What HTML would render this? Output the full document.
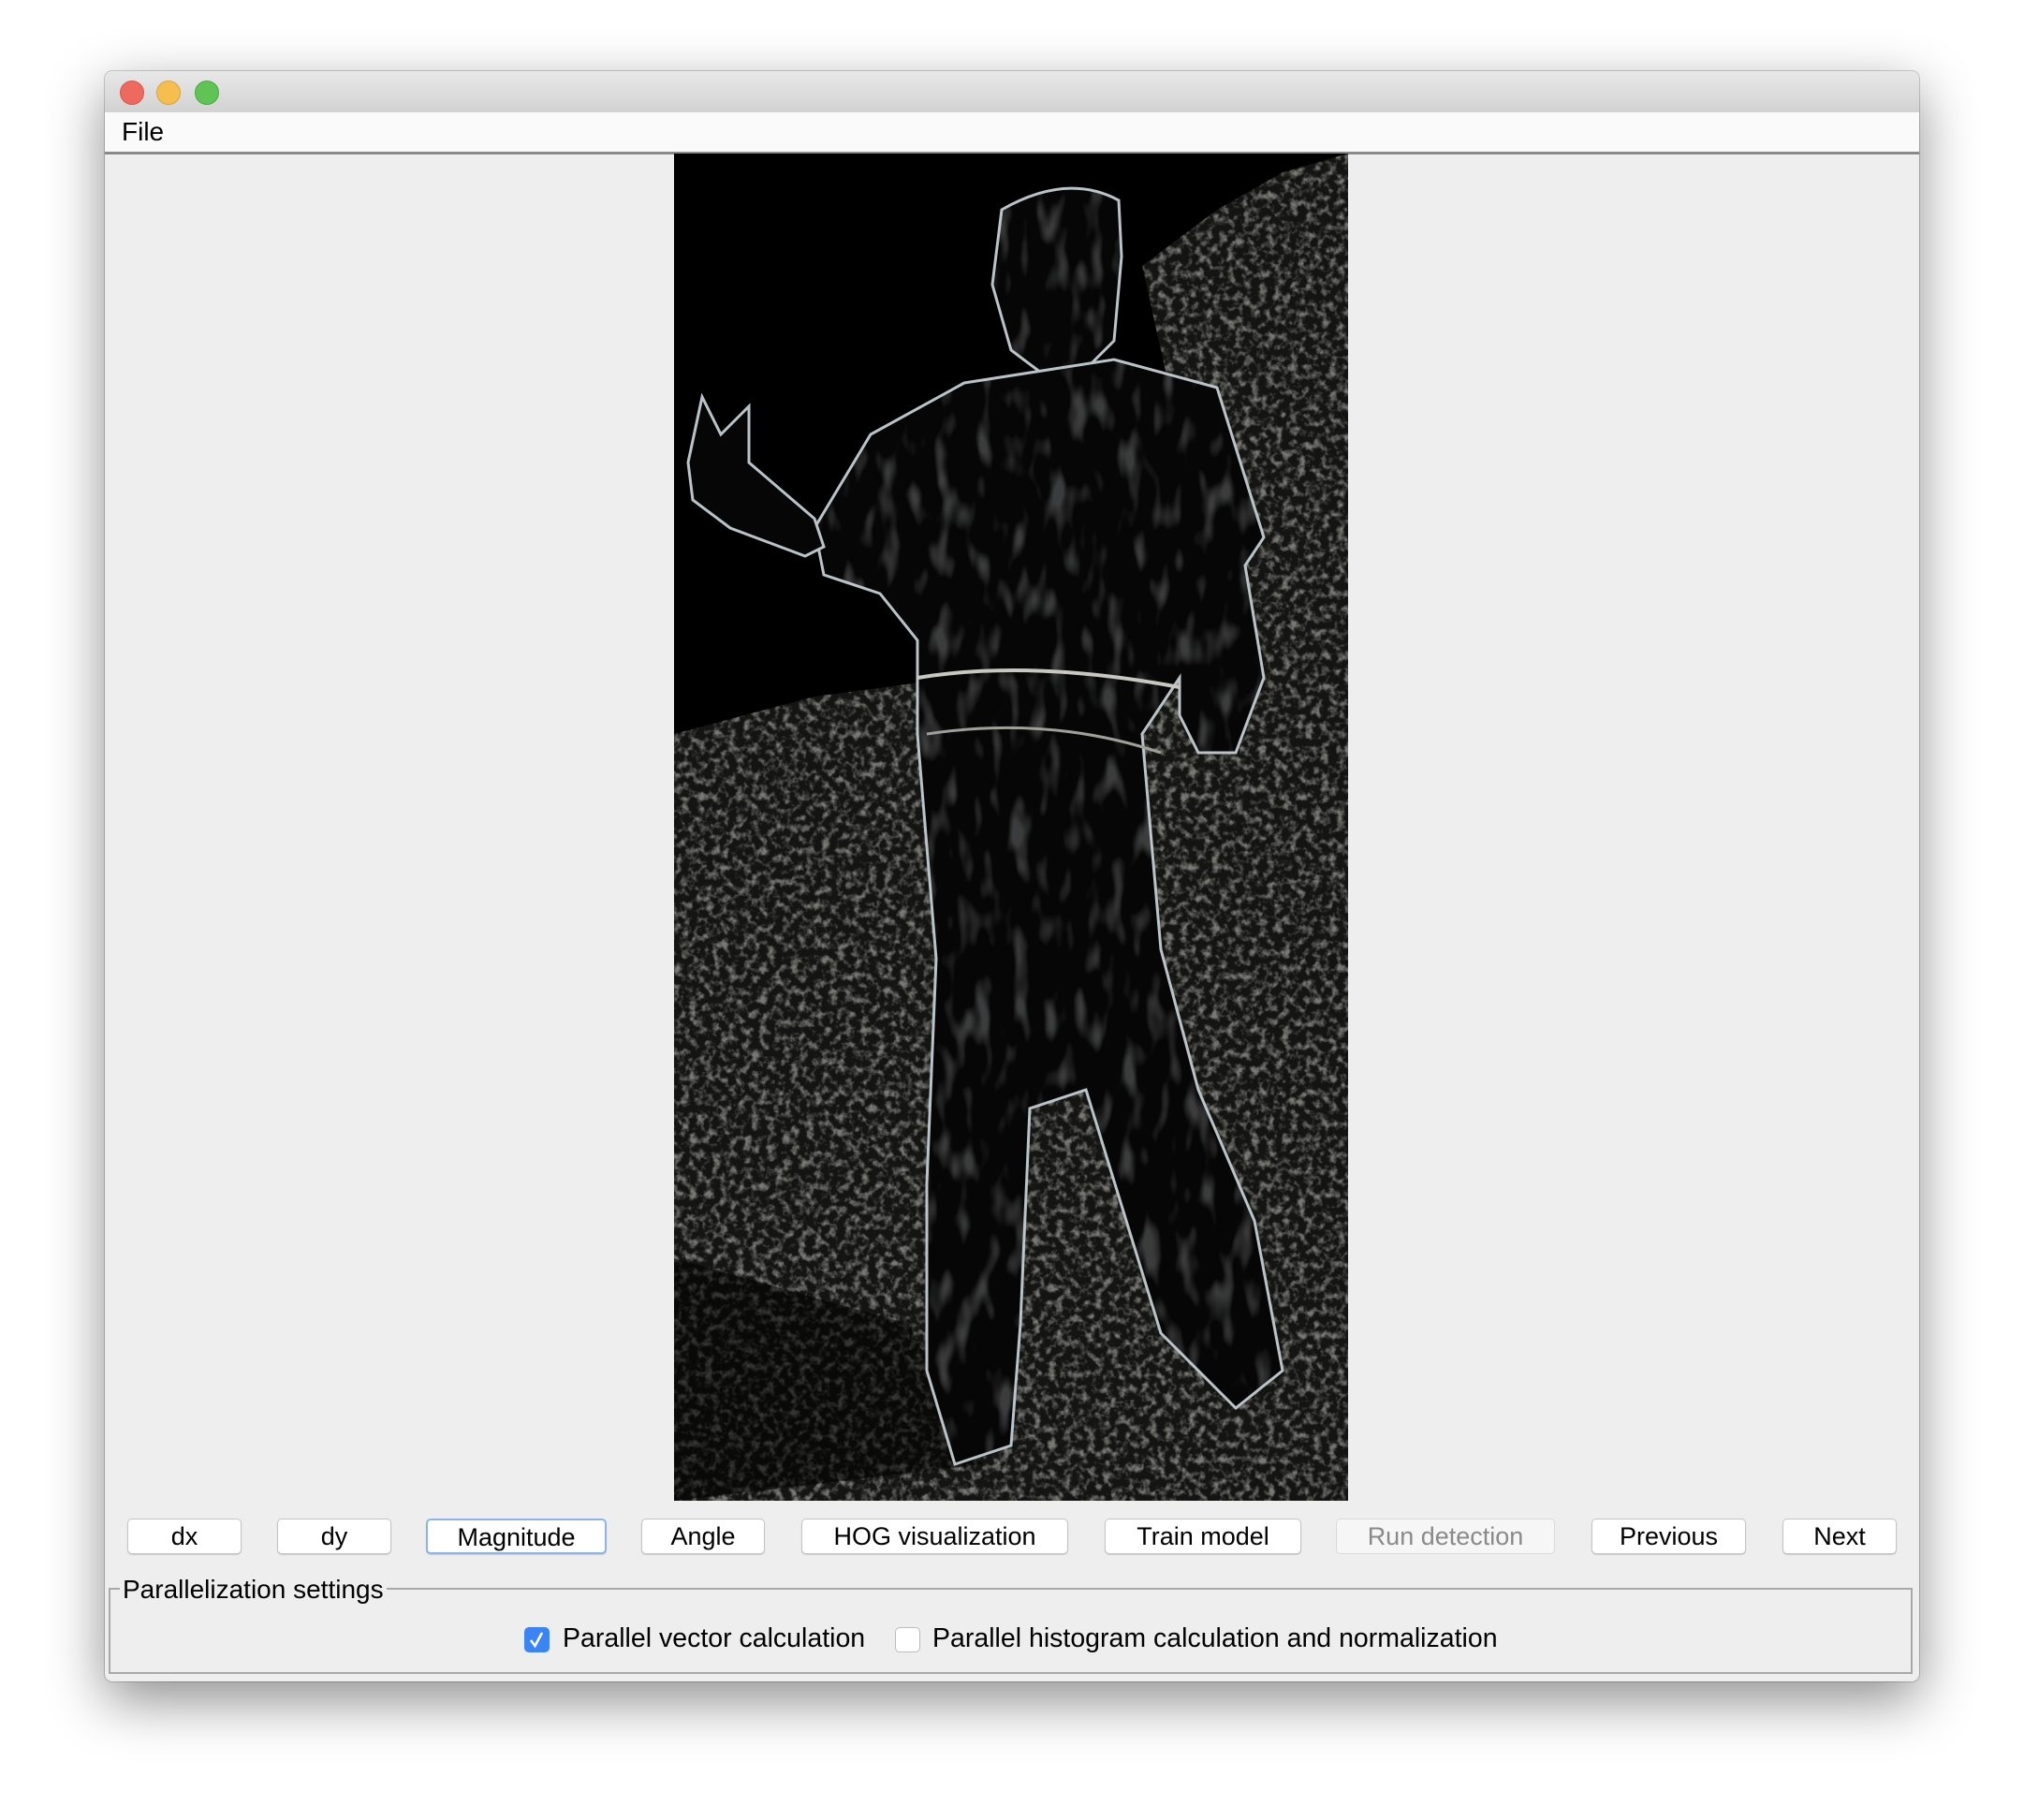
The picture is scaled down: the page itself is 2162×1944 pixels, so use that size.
<!DOCTYPE html>
<html><head><meta charset="utf-8"><style>
html,body{margin:0;padding:0;width:2162px;height:1944px;background:#fff;overflow:hidden;font-family:"Liberation Sans",sans-serif}
.win{position:absolute;left:112px;top:76px;width:1938px;height:1720px;background:#eeeeee;border-radius:8px;box-shadow:0 20px 60px rgba(0,0,0,.45),0 0 0 1px rgba(0,0,0,.18);overflow:hidden}
.title{position:absolute;left:0;top:0;width:100%;height:44px;background:linear-gradient(#e8e8e8,#d2d2d2);border-bottom:1px solid #b8b8b8}
.dot{position:absolute;top:10px;width:24px;height:24px;border-radius:50%}
.menu{position:absolute;left:0;top:44px;width:100%;height:42px;background:#fafafa;border-bottom:3px solid #8a8a8a}
.menu span{position:absolute;left:18px;top:5px;font-size:28px;color:#000}
.img{position:absolute;left:608px;top:88px;width:720px;height:1439px;background:#000}
.btn{position:absolute;top:1546px;height:38px;background:#fff;border:1px solid #c4c4c4;border-radius:5px;box-shadow:0 1px 1px rgba(0,0,0,.15);font-size:27px;line-height:36px;text-align:center;color:#000;box-sizing:border-box;white-space:nowrap}
.group{position:absolute;left:4px;top:1620px;width:1927px;height:92px;border:2px solid #a8a8a8;box-sizing:border-box}
.glabel{position:absolute;left:16px;top:1606px;background:#eeeeee;padding:0 3px;font-size:28px}
.cb{position:absolute;top:1662px;width:27px;height:27px;border-radius:5px;box-sizing:border-box}
.lbl{position:absolute;top:1658px;font-size:28.5px;white-space:nowrap}
</style></head><body>
<div class="win">
<div class="title">
<div class="dot" style="left:16px;background:#ee6a5e;border:1px solid #d8564b"></div>
<div class="dot" style="left:55px;background:#f6be4f;border:1px solid #dca23a"></div>
<div class="dot" style="left:96px;background:#5fc454;border:1px solid #4aa93f"></div>
</div>
<div class="menu"><span>File</span></div>
<div class="img">
<svg width="720" height="1439" viewBox="0 0 720 1439">
<defs>
<filter id="n" x="0" y="0" width="100%" height="100%">
<feTurbulence type="fractalNoise" baseFrequency="0.12" numOctaves="3" seed="3"/>
<feColorMatrix values="0 0 0 0 0.72  0 0 0 0 0.72  0 0 0 0 0.66  0 0 0 3 -1.35"/>
</filter>
<filter id="n2" x="0" y="0" width="100%" height="100%">
<feTurbulence type="fractalNoise" baseFrequency="0.05 0.02" numOctaves="2" seed="7"/>
<feColorMatrix values="0 0 0 0 0.7  0 0 0 0 0.72  0 0 0 0 0.74  0 0 0 4 -2.1"/>
</filter>
<clipPath id="bg"><path d="M0,620 L150,580 L300,560 L560,520 L540,300 L500,120 L580,60 L650,20 L720,0 L720,1439 L0,1439 Z"/></clipPath>
</defs>
<rect width="720" height="1439" fill="#000"/>
<g clip-path="url(#bg)">
<rect width="720" height="1439" fill="#141412"/>
<rect width="720" height="1439" filter="url(#n)" opacity=".5"/>
</g>
<path d="M0,1180 L250,1250 L330,1400 L0,1439 Z" fill="#000" opacity=".55"/>
<g fill="#060606" stroke="#b9c3c8" stroke-width="3">
<path d="M350,60 Q420,20 475,50 L478,110 L470,200 L440,230 L400,240 L360,210 L340,140 Z"/>
<path d="M310,245 L470,220 L580,250 L630,410 L610,440 L630,560 L600,640 L560,640 L540,600 L540,560 L500,620 L520,850 L560,1000 L620,1140 L650,1300 L600,1340 L520,1260 L440,1000 L380,1020 L370,1250 L360,1380 L300,1400 L270,1300 L270,1100 L280,860 L260,620 L260,520 L220,470 L160,450 L150,400 L210,300 Z"/>
<path d="M15,330 L30,260 L50,300 L80,270 L80,330 L150,390 L160,420 L140,430 L60,400 L20,370 Z"/>
</g>
<clipPath id="fig"><path d="M350,60 Q420,20 475,50 L478,110 L470,200 L440,230 L400,240 L360,210 L340,140 Z M310,245 L470,220 L580,250 L630,410 L610,440 L630,560 L600,640 L560,640 L540,600 L540,560 L500,620 L520,850 L560,1000 L620,1140 L650,1300 L600,1340 L520,1260 L440,1000 L380,1020 L370,1250 L360,1380 L300,1400 L270,1300 L270,1100 L280,860 L260,620 L260,520 L220,470 L160,450 L150,400 L210,300 Z"/></clipPath>
<rect width="720" height="1439" filter="url(#n2)" clip-path="url(#fig)" opacity=".25"/>
<path d="M260,560 Q380,540 540,570" stroke="#c8c8c0" stroke-width="4" fill="none"/>
<path d="M270,620 Q400,600 520,640" stroke="#a0a098" stroke-width="3" fill="none"/>
</svg>
</div>
<div class="btn" style="left:24px;width:122px">dx</div>
<div class="btn" style="left:184px;width:122px">dy</div>
<div class="btn" style="left:343px;width:193px;border:2px solid #8ab4ee">Magnitude</div>
<div class="btn" style="left:573px;width:132px">Angle</div>
<div class="btn" style="left:744px;width:285px">HOG visualization</div>
<div class="btn" style="left:1068px;width:210px">Train model</div>
<div class="btn" style="left:1315px;width:234px;background:#f6f6f6;color:#8a8a8a;border-color:#dadada;box-shadow:none">Run detection</div>
<div class="btn" style="left:1588px;width:165px">Previous</div>
<div class="btn" style="left:1792px;width:122px">Next</div>
<div class="group"></div>
<div class="glabel">Parallelization settings</div>
<div class="cb" style="left:448px;background:#3b84f5"><svg width="27" height="27" viewBox="0 0 27 27"><path d="M7,14 L11.5,20 L19,6" stroke="#fff" stroke-width="2.6" fill="none"/></svg></div>
<div class="lbl" style="left:489px">Parallel vector calculation</div>
<div class="cb" style="left:844px;background:#fff;border:1px solid #bcbcbc"></div>
<div class="lbl" style="left:884px">Parallel histogram calculation and normalization</div>
</div>
</body></html>
